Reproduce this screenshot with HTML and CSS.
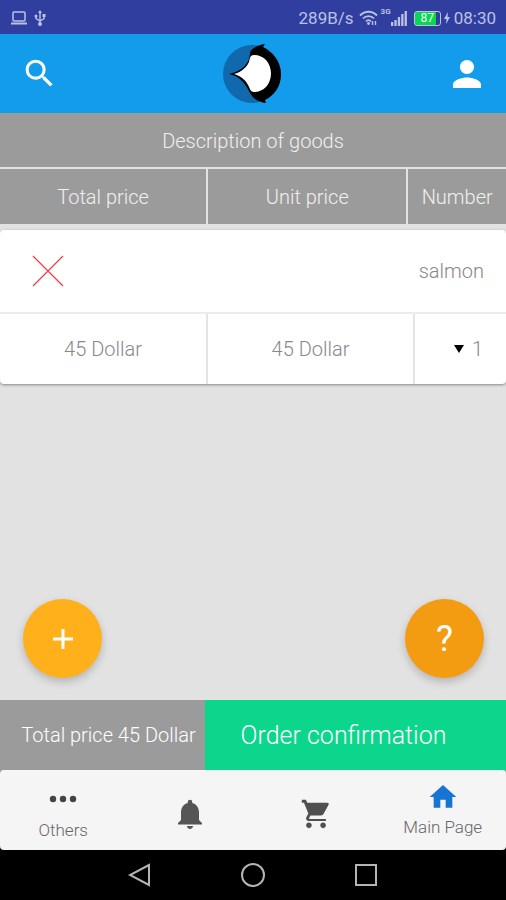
FILE: index.html
```html
<!DOCTYPE html>
<html lang="en">
<head>
<meta charset="utf-8">
<meta name="viewport" content="width=device-width, initial-scale=1">
<title>Order</title>
<link rel="stylesheet" href="styles.css">
</head>
<body>
<div class="status">
  <div class="status-group">
    <svg width="18" height="16" viewBox="0 0 18 16" fill="none" stroke="currentColor" stroke-width="1.5"><rect x="3" y="2" width="12" height="9" rx="1"/><path d="M1 13.5h16" stroke-width="2"/></svg>
    <svg class="usb" width="12" height="16" viewBox="0 0 12 16" fill="none" stroke="currentColor" stroke-width="1.4"><path d="M6 2v12M2 6v2.500l4 2.500 4-2.500V5"/><path d="M4 3l2-3 2 3zM8.500 4h3v3h-3z" fill="currentColor" stroke="none"/><circle cx="2" cy="6" r="1.500" fill="currentColor" stroke="none"/><circle cx="6" cy="14" r="2" fill="currentColor" stroke="none"/></svg>
  </div>
  <div class="status-group">
    <span class="speed">289B/s</span>
    <svg class="wifi" width="20" height="16" viewBox="0 0 20 16" fill="none" stroke="currentColor" stroke-width="1.800"><path d="M1 5.500c5-5 12-5 17 0M4 8.500c3-3.300 8-3.300 11 0M7 11.500c1.500-1.800 3.500-1.800 5 0"/><circle cx="9.500" cy="13.500" r="1.400" fill="currentColor" stroke="none"/><path d="M13.500 15v-4M16.500 11v4" stroke-width="1.400"/></svg>
    <span class="net">3G</span>
    <svg class="signal" width="16" height="16" viewBox="0 0 16 16" fill="currentColor"><path d="M0 12h2.300v4H0zM3.400 10h2.300v6H3.400zM6.800 7h2.300v9H6.800zM10.200 4h2.300v12h-2.300zM13.600 1h2.300v15h-2.300z"/></svg>
    <span class="battery">87</span>
    <svg class="bolt" width="6" height="12" viewBox="0 0 6 12" fill="currentColor"><path d="M4 0L0 7h2.500L2 12l4-7H3.500z"/></svg>
    <span class="time">08:30</span>
  </div>
</div>
<header class="appbar">
  <button class="icon-button" aria-label="Search"><svg width="37" height="37" viewBox="0 0 24 24" fill="currentColor"><path d="M15.500 14h-.79l-.28-.27A6.471 6.471 0 0 0 16 9.500 6.500 6.500 0 1 0 9.500 16c1.610 0 3.090-.59 4.230-1.570l.27.28v.79l5 4.990L20.490 19l-4.990-5zm-6 0C7.010 14 5 11.990 5 9.500S7.010 5 9.500 5 14 7.010 14 9.500 11.990 14 9.500 14z"/></svg></button>
  <svg class="logo" width="58" height="60" viewBox="0 0 58 60"><circle cx="29" cy="30" r="29" fill="#1068ad"/><path d="M42 0c-7 1-13 4-15 8 0 7-3 13-9 17-3 2-7 4-12 5 5 1 9 3 12 6 6 5 7 11 11 16 3 4 8 6 14 7l-1-3c10-5 16-14 16-26S50 8 40 3z" fill="#000"/><path d="M11 30c7-2 12-6 15-12 1-4 1-7 5-7 10 0 17 8 17 18.500S41 48 31 48c-4 0-4-4-6-7-3-6-8-9-14-11z" fill="#fff"/></svg>
  <button class="icon-button" aria-label="Account"><svg width="42" height="42" viewBox="0 0 24 24" fill="currentColor"><path d="M12 12c2.210 0 4-1.790 4-4s-1.790-4-4-4-4 1.790-4 4 1.790 4 4 4zm0 2c-2.670 0-8 1.340-8 4v2h16v-2c0-2.660-5.330-4-8-4z"/></svg></button>
</header>
<main class="content">
  <div class="heads">
    <div class="head wide">Description of goods</div>
    <div class="head">Total price</div>
    <div class="head">Unit price</div>
    <div class="head">Number</div>
  </div>
  <section class="item">
    <div class="item-top">
      <button class="remove" aria-label="Remove salmon"><svg width="32" height="32" viewBox="0 0 32 32" fill="none" stroke="#ef3e4a" stroke-width="1.300"><path d="M1 1l30 30M31 1L1 31"/></svg></button>
      <span>salmon</span>
    </div>
    <div class="item-row">
      <div class="cell">45 Dollar</div>
      <div class="cell">45 Dollar</div>
      <label class="cell quantity"><svg width="10" height="8" viewBox="0 0 10 8"><path d="M0 0h10L5 8z"/></svg><select aria-label="Number"><option>1</option></select></label>
    </div>
  </section>
  <div class="fabs">
    <button class="fab" aria-label="Add"><svg width="20" height="20" viewBox="0 0 20 20" stroke="#fff" stroke-width="3"><path d="M10 0v20M0 10h20"/></svg></button>
    <button class="fab help">?</button>
  </div>
</main>
<div class="summary">
  <div class="total">Total price 45 Dollar</div>
  <button class="confirm">Order confirmation</button>
</div>
<div class="tabs-back">
<nav class="tabs">
  <a class="tab" href="#"><svg width="28" height="32" viewBox="0 0 28 32" fill="#444"><circle cx="4" cy="16" r="3.200"/><circle cx="14" cy="16" r="3.200"/><circle cx="24" cy="16" r="3.200"/></svg><span>Others</span></a>
  <a class="tab" href="#" aria-label="Notifications"><svg width="36" height="36" viewBox="0 0 24 24" fill="#555"><path d="M12 22c1.100 0 2-.9 2-2h-4c0 1.100.9 2 2 2zm6-6v-5c0-3.070-1.640-5.640-4.500-6.320V4a1.500 1.500 0 0 0-3 0v.68C7.630 5.360 6 7.920 6 11v5l-2 2v1h16v-1l-2-2z"/></svg></a>
  <a class="tab" href="#" aria-label="Cart"><svg width="34" height="34" viewBox="0 0 24 24" fill="#505050"><path d="M7 18c-1.100 0-1.990.9-1.990 2S5.900 22 7 22s2-.9 2-2-.9-2-2-2zM2 2v2h1.500l3.100 7.590-1.350 2.450C4.520 15.370 5.480 17 7 17h12v-1.500H7.420c-.14 0-.25-.3-.25-.5l.03-.37.900-1.630h7.450c.75 0 1.410-.41 1.750-1.030l3.580-6.490A1 1 0 0 0 20.010 4H5.810l-.94-2H2zm15 16c-1.100 0-1.990.9-1.990 2s.89 2 1.990 2 2-.9 2-2-.9-2-2-2z"/></svg></a>
  <a class="tab home" href="#"><svg width="32" height="32" viewBox="0 0 24 24" fill="#1674d3"><path d="M10 20v-6h4v6h5v-8h3L12 3 2 12h3v8z"/></svg><span>Main Page</span></a>
</nav>
</div>
<div class="system">
  <button aria-label="Back"><svg width="24" height="24" viewBox="0 0 24 24"><path d="M21 2v20L2 12z"/></svg></button>
  <button aria-label="Home"><svg width="24" height="24" viewBox="0 0 24 24"><circle cx="12" cy="12" r="11"/></svg></button>
  <button aria-label="Recents"><svg width="24" height="24" viewBox="0 0 24 24"><path d="M2 2h20v20H2z"/></svg></button>
</div>
</body>
</html>
```
FILE: styles.css
```css
* { box-sizing: border-box; }
body {
  margin: 0;
  min-height: 100vh;
  display: flex;
  flex-direction: column;
  background: #e2e2e2;
  font-family: Roboto, sans-serif;
  font-weight: 300;
  font-size: 20px;
  line-height: 24px;
}
button { border: 0; padding: 0; background: none; color: inherit; font: inherit; }
svg { display: block; flex: none; }

.status {
  display: flex;
  justify-content: space-between;
  align-items: center;
  height: 34px;
  padding: 2px 10px 0;
  background: #303f9f;
  color: #bcc2e6;
  font-size: 17px;
  font-weight: 400;
}
.status-group { display: flex; align-items: center; }
.usb { margin-left: 6px; }
.wifi { margin-left: 5px; }
.net { align-self: flex-start; margin-left: 2px; font-size: 8px; line-height: 12px; font-weight: 700; }
.battery {
  width: 27px;
  height: 15px;
  margin: 0 3px 0 7px;
  border: 1px solid #bcc2e6;
  border-radius: 3px;
  background: linear-gradient(90deg, #08d850 85%, #303f9f 85%);
  color: #fff;
  font-size: 12px;
  line-height: 13px;
  text-align: center;
}
.time { margin-left: 4px; }

.appbar {
  display: flex;
  justify-content: space-between;
  align-items: center;
  height: 79px;
  padding: 0 18px 0 21px;
  background: #129ceb;
  color: #fff;
}

.content { flex: 1; display: flex; flex-direction: column; }
.heads {
  display: grid;
  grid-template-columns: 207fr 199fr 98fr;
  gap: 2px;
  background: #e2e2e2;
  color: #f0f0f0;
}
.head { padding: 16px 0 15px; background: #9b9b9b; text-align: center; }
.wide { padding-bottom: 14px; grid-column: 1 / -1; }
.item {
  margin-top: 6px;
  border-radius: 4px;
  background: #fff;
  box-shadow: 0 1px 3px #0006;
  color: #888;
}
.item-top {
  display: flex;
  justify-content: space-between;
  align-items: center;
  height: 84px;
  padding: 0 22px 0 32px;
  border-bottom: 2px solid #ececec;
}
.item-row { display: grid; grid-template-columns: 206fr 207fr 93fr; }
.cell { padding: 23px 0; text-align: center; }
.cell + .cell { border-left: 2px solid #e4e4e4; }
.quantity { display: flex; justify-content: flex-end; align-items: center; gap: 8px; }
.cell.quantity { padding-right: 22px; }
.quantity select { appearance: none; border: 0; padding: 0; background: none; color: inherit; font: inherit; }

.fabs { display: flex; justify-content: space-between; margin-top: auto; padding: 0 22px 22px 23px; }
.fab {
  display: grid;
  place-items: center;
  width: 79px;
  height: 79px;
  border-radius: 50%;
  background: #ffb01a;
  box-shadow: 0 4px 8px #0003;
  color: #fff;
}
.help { background: #f39c12; font-size: 36px; font-weight: 400; }

.summary { display: grid; grid-template-columns: 205fr 301fr; height: 70px; }
.total { display: grid; place-items: center; padding-left: 12px; background: #9b9b9b; color: #fff; white-space: nowrap; }
.confirm { padding: 2px 24px 0 0; background: #0cd68c; color: #fff; font-size: 25px; }

.tabs-back { background: linear-gradient(#9b9b9b 50%, #000 50%); }
.tabs { display: grid; grid-template-columns: repeat(4, 1fr); height: 80px; border-radius: 4px; background: #f5f5f5; }
.tab {
  display: flex;
  flex-direction: column;
  align-items: center;
  justify-content: center;
  padding-top: 8px;
  color: #666;
  font-size: 17px;
  line-height: 30px;
  text-decoration: none;
}
.home { padding-top: 2px; line-height: 28px; }

.system { display: flex; justify-content: center; gap: 89px; height: 50px; background: #000; }
.system svg { fill: none; stroke: #b4b4b4; stroke-width: 2; }
```
